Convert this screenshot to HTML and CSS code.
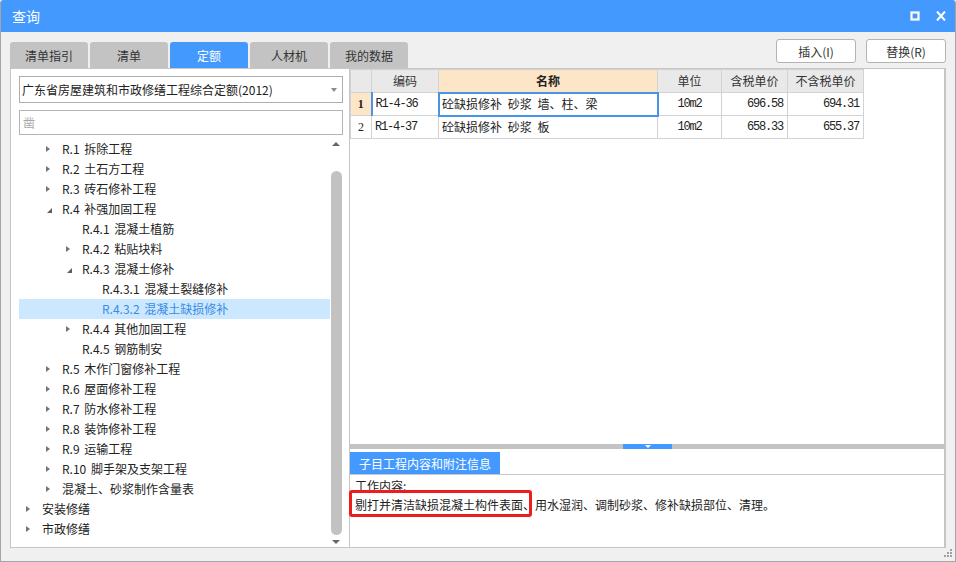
FILE: index.html
```html
<!DOCTYPE html>
<html lang="zh-CN">
<head>
<meta charset="utf-8">
<title>查询</title>
<link rel="stylesheet" href="styles.css">
</head>
<body>
<div class="window">
  <header class="titlebar">
    <span class="title">查询</span>
    <div class="win-ctrls">
      <svg class="ic" width="10" height="10" viewBox="0 0 10 10"><rect x="1.5" y="1.5" width="7" height="7" fill="none" stroke="#fff" stroke-width="2.2"/></svg>
      <svg class="ic" width="10" height="10" viewBox="0 0 10 10"><path d="M1 0.5L9 9.5M9 0.5L1 9.5" stroke="#fff" stroke-width="2"/></svg>
    </div>
  </header>

  <div class="toolbar">
    <nav class="tabs">
      <span class="tab">清单指引</span>
      <span class="tab">清单</span>
      <span class="tab active">定额</span>
      <span class="tab">人材机</span>
      <span class="tab">我的数据</span>
    </nav>
    <div class="actions">
      <button class="btn">插入(I)</button>
      <button class="btn">替换(R)</button>
    </div>
  </div>

  <div class="content">
    <aside class="left-panel">
      <div class="select">
        <span class="select-text">广东省房屋建筑和市政修缮工程综合定额(2012)</span>
        <i class="caret"></i>
      </div>
      <div class="search">凿</div>
      <div class="tree-wrap">
        <ul class="tree">
          <li class="node l1"><i class="tw closed"></i><span>R.1 拆除工程</span></li>
          <li class="node l1"><i class="tw closed"></i><span>R.2 土石方工程</span></li>
          <li class="node l1"><i class="tw closed"></i><span>R.3 砖石修补工程</span></li>
          <li class="node l1"><i class="tw open"></i><span>R.4 补强加固工程</span></li>
          <li class="node l2"><i class="tw"></i><span>R.4.1 混凝土植筋</span></li>
          <li class="node l2"><i class="tw closed"></i><span>R.4.2 粘贴块料</span></li>
          <li class="node l2"><i class="tw open"></i><span>R.4.3 混凝土修补</span></li>
          <li class="node l3"><i class="tw"></i><span>R.4.3.1 混凝土裂缝修补</span></li>
          <li class="node l3 selected"><i class="tw"></i><span>R.4.3.2 混凝土缺损修补</span></li>
          <li class="node l2"><i class="tw closed"></i><span>R.4.4 其他加固工程</span></li>
          <li class="node l2"><i class="tw"></i><span>R.4.5 钢筋制安</span></li>
          <li class="node l1"><i class="tw closed"></i><span>R.5 木作门窗修补工程</span></li>
          <li class="node l1"><i class="tw closed"></i><span>R.6 屋面修补工程</span></li>
          <li class="node l1"><i class="tw closed"></i><span>R.7 防水修补工程</span></li>
          <li class="node l1"><i class="tw closed"></i><span>R.8 装饰修补工程</span></li>
          <li class="node l1"><i class="tw closed"></i><span>R.9 运输工程</span></li>
          <li class="node l1"><i class="tw closed"></i><span>R.10 脚手架及支架工程</span></li>
          <li class="node l1"><i class="tw closed"></i><span>混凝土、砂浆制作含量表</span></li>
          <li class="node l0"><i class="tw closed"></i><span>安装修缮</span></li>
          <li class="node l0"><i class="tw closed"></i><span>市政修缮</span></li>
        </ul>
        <div class="vscroll">
          <div class="sb-btn up"><i></i></div>
          <div class="sb-thumb"></div>
          <div class="sb-btn down"><i></i></div>
        </div>
      </div>
    </aside>

    <section class="right-panel">
      <div class="grid-area">
        <table class="grid">
          <colgroup>
            <col class="c-rn"><col class="c-code"><col class="c-name"><col class="c-unit"><col class="c-p1"><col class="c-p2">
          </colgroup>
          <thead>
            <tr><th class="rn"></th><th>编码</th><th class="hl">名称</th><th>单位</th><th>含税单价</th><th>不含税单价</th></tr>
          </thead>
          <tbody>
            <tr class="cur"><td class="rn">1</td><td class="code">R1-4-36</td><td class="name focus">砼缺损修补 砂浆 墙、柱、梁</td><td class="unit">10m2</td><td class="num">696.58</td><td class="num">694.31</td></tr>
            <tr><td class="rn">2</td><td class="code">R1-4-37</td><td class="name">砼缺损修补 砂浆 板</td><td class="unit">10m2</td><td class="num">658.33</td><td class="num">655.37</td></tr>
          </tbody>
        </table>
      </div>
      <div class="splitter"><span class="splitter-handle"><i></i></span></div>
      <div class="detail-head"><span class="detail-tab">子目工程内容和附注信息</span></div>
      <div class="detail-body">
        <p>工作内容:</p>
        <p>剔打并清洁缺损混凝土构件表面、用水湿润、调制砂浆、修补缺损部位、清理。</p>
        <span class="highlight"></span>
      </div>
    </section>
  </div>

  <div class="statusbar">
    <svg class="grip" width="8" height="8" viewBox="0 0 8 8" fill="#a0a0a0">
      <rect x="6" y="0" width="2" height="2"/>
      <rect x="3" y="3" width="2" height="2"/><rect x="6" y="3" width="2" height="2"/>
      <rect x="0" y="6" width="2" height="2"/><rect x="3" y="6" width="2" height="2"/><rect x="6" y="6" width="2" height="2"/>
    </svg>
  </div>
</div>
</body>
</html>
```
FILE: styles.css
```css
* { box-sizing: border-box; }
html, body { margin: 0; padding: 0; }
body {
  width: 956px;
  height: 562px;
  overflow: hidden;
  background: #ffffff;
  font-family: "Noto Sans CJK SC", "Microsoft YaHei", sans-serif;
  font-size: 12px;
  color: #222;
}

.window {
  width: 956px;
  height: 562px;
  display: flex;
  flex-direction: column;
  background: #f0f0f0;
  border: 1px solid #a4a4a4;
  border-top: none;
  border-radius: 3px 3px 0 0;
  overflow: hidden;
}

/* title bar */
.titlebar {
  height: 32px;
  flex: none;
  display: flex;
  align-items: center;
  padding: 0 9px 0 11px;
  background: #4499ff;
  color: #fff;
}
.title { font-size: 14px; line-height: 20px; }
.win-ctrls { margin-left: auto; display: flex; align-items: center; gap: 16px; }
.ic { display: block; }

/* toolbar */
.toolbar {
  height: 36px;
  flex: none;
  display: flex;
  padding: 0 9px;
}
.tabs { display: flex; gap: 2px; align-self: flex-end; }
.tab {
  width: 78px;
  height: 26px;
  display: flex;
  align-items: center;
  justify-content: center;
  background: #c3c3c3;
  color: #333;
  border-radius: 3px 3px 0 0;
  font-size: 12px;
}
.tab.active { background: #4499ff; color: #fff; }
.actions { margin-left: auto; margin-top: 7px; display: flex; gap: 10px; align-self: flex-start; }
.btn {
  width: 80px;
  height: 24px;
  padding: 0;
  background: #fff;
  border: 1px solid #b4b4b4;
  border-radius: 3px;
  font-family: inherit;
  font-size: 12px;
  color: #333;
}

/* content */
.content {
  height: 480px;
  flex: none;
  display: flex;
  padding: 0 9px;
}
.left-panel {
  width: 339px;
  flex: none;
  display: flex;
  flex-direction: column;
  background: #fff;
  border: 1px solid #c6c6c6;
  border-right: none;
  padding: 7px 6px 0 8px;
}
.select {
  height: 27px;
  flex: none;
  display: flex;
  align-items: center;
  border: 1px solid #adadad;
  padding: 0 5px 0 2px;
  color: #222;
}
.caret {
  margin-left: auto;
  width: 0;
  height: 0;
  border-top: 4px solid #8a8a8a;
  border-left: 3px solid transparent;
  border-right: 3px solid transparent;
}
.search {
  height: 25px;
  flex: none;
  margin-top: 7px;
  border: 1px solid #b4b4b4;
  padding-left: 3px;
  line-height: 23px;
  color: #a8a8a8;
}
.tree-wrap {
  flex: 1;
  margin-top: 4px;
  display: flex;
  min-height: 0;
}
.tree {
  flex: 1;
  margin: 0;
  padding: 0;
  list-style: none;
}
.node {
  height: 20px;
  display: flex;
  align-items: center;
  line-height: 20px;
  color: #222;
  white-space: nowrap;
  word-spacing: 2px;
}
.node.l0 { padding-left: 7px; }
.node.l1 { padding-left: 27px; }
.node.l2 { padding-left: 47px; }
.node.l3 { padding-left: 67px; }
.node.selected { background: #cce8ff; color: #3a8be6; }
.tw { width: 16px; flex: none; display: flex; align-items: center; height: 20px; }
.tw.closed::before {
  content: "";
  width: 0;
  height: 0;
  border-top: 3px solid transparent;
  border-bottom: 3px solid transparent;
  border-left: 4px solid #747474;
}
.tw.open::before {
  content: "";
  width: 0;
  height: 0;
  margin: 2px 0 0 1px;
  border-style: solid;
  border-width: 0 0 5px 5px;
  border-color: transparent transparent #5e5e5e transparent;
}
.vscroll {
  width: 12px;
  flex: none;
  margin-right: 1px;
  display: flex;
  flex-direction: column;
}
.sb-btn { flex: none; display: flex; justify-content: center; }
.sb-btn.up { height: 10px; align-items: center; }
.sb-btn.down { height: 12px; align-items: flex-end; padding-bottom: 3px; }
.sb-btn.up i {
  width: 0; height: 0;
  border-bottom: 4px solid #666;
  border-left: 4px solid transparent;
  border-right: 4px solid transparent;
}
.sb-btn.down i {
  width: 0; height: 0;
  border-top: 4px solid #666;
  border-left: 4px solid transparent;
  border-right: 4px solid transparent;
}
.sb-thumb {
  flex: 1;
  margin-top: 22px;
  width: 11px;
  align-self: center;
  background: #c2c2c2;
  border-radius: 6px;
}

/* right panel */
.right-panel {
  flex: 1;
  display: flex;
  flex-direction: column;
  background: #fff;
  border: 1px solid #c6c6c6;
  border-right-width: 2px;
}
.grid-area { flex: 1; min-height: 0; }
.grid {
  border-collapse: collapse;
  table-layout: fixed;
  width: 514px;
  color: #222;
}
.c-rn { width: 21px; }
.c-code { width: 67px; }
.c-name { width: 219px; }
.c-unit { width: 64px; }
.c-p1 { width: 66px; }
.c-p2 { width: 76px; }
.grid tr { height: 23px; }
.grid th, .grid td {
  border: 1px solid #d2d2d2;
  padding: 0 3px;
  white-space: nowrap;
  overflow: hidden;
  font-size: 12px;
  line-height: 20px;
}
.grid th {
  background: #e9e9e9;
  font-weight: normal;
  color: #333;
  text-align: center;
}
.grid th.hl { background: #fde6c8; font-weight: bold; color: #222; }
.grid td.rn {
  font-family: "Liberation Serif", serif;
  font-size: 12px;
  text-align: center;
  padding: 0;
}
.grid tr.cur td.rn { background: #fde6c8; font-weight: bold; }
.grid td.code,
.grid td.unit,
.grid td.num {
  font-family: "Liberation Mono", monospace;
  font-size: 12px;
  letter-spacing: -1.2px;
}
.grid tr.cur td.code { border-left: 2px solid #4a94e8; }
.grid td.name { word-spacing: 3px; }
.grid td.focus { outline: 2px solid #4a94e8; outline-offset: -1px; }
.grid td.unit { text-align: center; }
.grid td.num { text-align: right; padding-right: 4px; }

.splitter {
  height: 5px;
  flex: none;
  background: #c3c3c3;
  display: flex;
  padding-left: 273px;
}
.splitter-handle {
  width: 49px;
  height: 5px;
  background: #4499ff;
  display: flex;
  justify-content: center;
  align-items: center;
}
.splitter-handle i {
  width: 0; height: 0;
  border-top: 3px solid #fff;
  border-left: 3px solid transparent;
  border-right: 3px solid transparent;
}
.detail-head {
  height: 25px;
  flex: none;
  display: flex;
  align-items: flex-end;
}
.detail-tab {
  width: 150px;
  height: 22px;
  display: flex;
  align-items: center;
  justify-content: center;
  background: #4499ff;
  color: #fff;
  font-size: 12px;
}
.detail-body {
  height: 73px;
  flex: none;
  position: relative;
  border-top: 1px solid #c6c6c6;
  padding: 1px 5px;
  line-height: 19px;
  color: #222;
}
.detail-body p { margin: 0; }
.highlight {
  position: absolute;
  left: -1px;
  top: 15px;
  width: 183px;
  height: 27px;
  border: 3px solid #ee1d1d;
  border-radius: 3px;
}

.statusbar {
  flex: 1;
  display: flex;
  justify-content: flex-end;
  align-items: flex-start;
  padding: 1px 3px 0 0;
}
.grip { display: block; }
```
